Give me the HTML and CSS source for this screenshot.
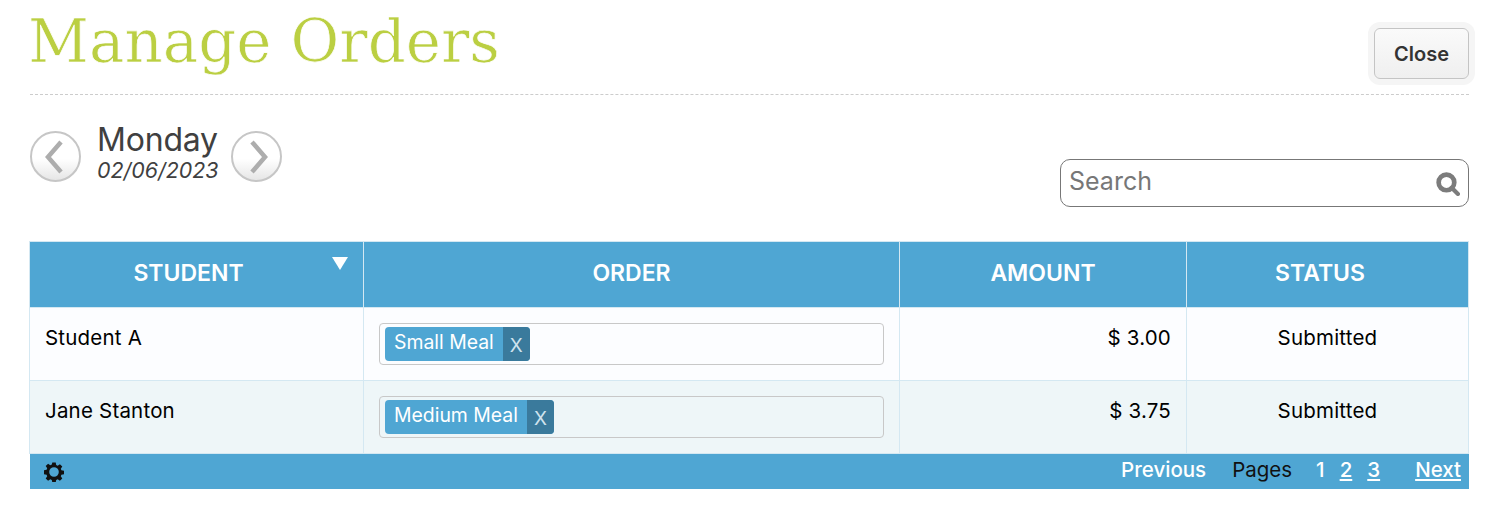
FILE: index.html
```html
<!DOCTYPE html>
<html lang="en">
<head>
<meta charset="utf-8">
<title>Manage Orders</title>
<link rel="stylesheet" href="styles.css">
</head>
<body>
<main class="page">
  <header class="top">
    <h1 class="title">Manage Orders</h1>
    <button class="close" type="button">Close</button>
  </header>
  <section class="tools">
    <div class="daynav">
      <button class="circle" type="button" aria-label="Previous day">
        <svg viewBox="0 0 50 50" width="50" height="50"><path d="M30 10 L17 25 L30 40" fill="none" stroke="#adadad" stroke-width="4.500"/></svg>
      </button>
      <div class="date">
        <div class="day">Monday</div>
        <div class="dateval">02/06/2023</div>
      </div>
      <button class="circle" type="button" aria-label="Next day">
        <svg viewBox="0 0 50 50" width="50" height="50"><path d="M20 10 L33 25 L20 40" fill="none" stroke="#adadad" stroke-width="4.500"/></svg>
      </button>
    </div>
    <div class="search">
      <span class="placeholder">Search</span>
      <svg class="glass" viewBox="0 0 24 24" width="25" height="25"><circle cx="11" cy="11" r="7.500" fill="none" stroke="#7c7c7c" stroke-width="4.500"/><path d="M16 16 L22 22" stroke="#7c7c7c" stroke-width="4" stroke-linecap="round"/></svg>
    </div>
  </section>
  <table class="orders">
    <colgroup><col class="c1"><col class="c2"><col class="c3"><col class="c4"></colgroup>
    <thead>
      <tr>
        <th class="sorted">STUDENT<span class="arrow"></span></th>
        <th>ORDER</th>
        <th>AMOUNT</th>
        <th class="statushead">STATUS</th>
      </tr>
    </thead>
    <tbody>
      <tr>
        <td>Student A</td>
        <td><div class="tagbox"><span class="tag"><span class="tagname">Small Meal</span><span class="tagx">X</span></span></div></td>
        <td class="amount">$ 3.00</td>
        <td class="status">Submitted</td>
      </tr>
      <tr class="alt">
        <td>Jane Stanton</td>
        <td><div class="tagbox"><span class="tag"><span class="tagname">Medium Meal</span><span class="tagx">X</span></span></div></td>
        <td class="amount">$ 3.75</td>
        <td class="status">Submitted</td>
      </tr>
    </tbody>
  </table>
  <footer class="pager">
    <svg class="gear" viewBox="0 0 20 20" width="20" height="20"><path fill="#111" fill-rule="evenodd" d="M8.300 0.500h3.400l.5 2.600 1.500.6 2.200-1.500 2.400 2.400-1.500 2.200.6 1.500 2.600.5v3.400l-2.600.5-.6 1.500 1.500 2.200-2.400 2.400-2.200-1.500-1.500.6-.5 2.600H8.300l-.5-2.600-1.500-.6-2.200 1.500-2.400-2.400 1.500-2.200-.6-1.500-2.600-.5V8.300l2.600-.5.6-1.500-1.500-2.200 2.400-2.400 2.200 1.500 1.500-.6zM10 5.200a4.800 4.800 0 1 0 0 9.600a4.800 4.800 0 1 0 0-9.600z"/></svg>
    <div class="pagelinks">
      <span class="prev">Previous</span>
      <span class="pages">Pages</span>
      <span class="num">1</span>
      <a class="num" href="#">2</a>
      <a class="num" href="#">3</a>
      <a class="next" href="#">Next</a>
    </div>
  </footer>
</main>
</body>
</html>
```
FILE: styles.css
```css
* { box-sizing: border-box; }
html, body { margin: 0; background: #fff; }
body { font-family: Inter, Lato, sans-serif; color: #000; }
.page { width: 1498px; height: 516px; padding: 0 29px 0 30px; }

.top { height: 95px; display: flex; justify-content: space-between; align-items: flex-start; border-bottom: 1px dashed #ccc; }
.title { margin: 0 0 0 -2px; padding-top: 6px; font-family: "DejaVu Serif", serif; font-weight: 400; font-size: 59.500px; line-height: 72px; color: #bbcf42; -webkit-text-stroke: 0.700px #fff; }
.close { margin-top: 28px; width: 95px; height: 51px; border: 1px solid #c4c4c4; border-radius: 6px; background: linear-gradient(#fafafa, #efefef); box-shadow: 0 0 0 6px #f5f5f5; font-family: inherit; font-size: 20px; font-weight: 600; color: #333; }

.tools { height: 146px; display: flex; justify-content: space-between; align-items: flex-start; }
.daynav { display: flex; margin-top: 25px; align-items: flex-start; }
.circle { width: 51px; height: 51px; margin-top: 11px; padding: 0; border: 2px solid #c6c6c6; border-radius: 50%; background: linear-gradient(#fff 55%, #e6e6e6); display: flex; align-items: center; justify-content: center; }
.circle svg { flex: none; }
.date { margin: 1px 14px 0 16px; color: #404040; width: 120px; white-space: nowrap; }
.day { font-size: 32px; line-height: 38px; letter-spacing: -0.200px; }
.dateval { font-size: 21.400px; line-height: 23px; font-style: italic; }
.search { margin-top: 64px; width: 409px; height: 48px; padding: 0 8px 0 8px; border: 1px solid #777; border-radius: 10px; display: flex; align-items: center; justify-content: space-between; }
.placeholder { font-size: 25px; color: #777; position: relative; top: -2px; }

.orders { width: 1439px; margin-left: -1px; border-collapse: collapse; table-layout: fixed; font-size: 20.500px; letter-spacing: 0.200px; }
.c1 { width: 334px; } .c2 { width: 536px; } .c3 { width: 287px; } .c4 { width: 282px; }
.orders th { height: 66px; padding: 0 0 3px; background: #4fa6d3; color: #fff; font-size: 23px; font-weight: 600; letter-spacing: 0; border: 1px solid #d4e8f2; position: relative; }
.orders th.sorted { padding-right: 16px; }
.orders th.statushead { padding-right: 15px; }
.arrow { position: absolute; top: 15px; right: 15px; border-left: 8px solid transparent; border-right: 8px solid transparent; border-top: 13px solid #fff; }
.orders td { height: 73px; padding: 17px 15px 0; vertical-align: top; background: #fcfdff; border: 1px solid #d4e8f2; line-height: 25px; }
.orders .alt td { background: #eef6f8; }
.orders td:nth-child(2) { padding: 15px 15px 0; }
.orders td.amount { text-align: right; }
.orders td.status { text-align: center; }
.tagbox { height: 42px; padding: 3px 5px; border: 1px solid #c8c8c8; border-radius: 4px; background: transparent; }
.tag { display: inline-flex; height: 34px; border-radius: 4px; overflow: hidden; background: #4fa6d3; color: #fff; letter-spacing: 0; }
.tagname { padding: 0 9px; font-size: 19.400px; line-height: 31px; }
.tagx { width: 27px; background: #3a7a9c; color: #cfe3ee; text-align: center; font-size: 19px; font-weight: 400; line-height: 37px; }

.pager { width: 1439px; height: 35px; background: #4fa6d3; display: flex; justify-content: space-between; align-items: center; padding: 0 8px 0 14px; font-size: 20.500px; font-weight: 500; }
.pagelinks { display: flex; align-items: center; color: #fff; position: relative; top: -2px; }
.pagelinks a { color: #fff; text-decoration: underline; }
.pages { color: #111; font-weight: 400; margin: 0 24px 0 26px; }
.num { margin-right: 15px; }
.next { margin-left: 20px; }
```
